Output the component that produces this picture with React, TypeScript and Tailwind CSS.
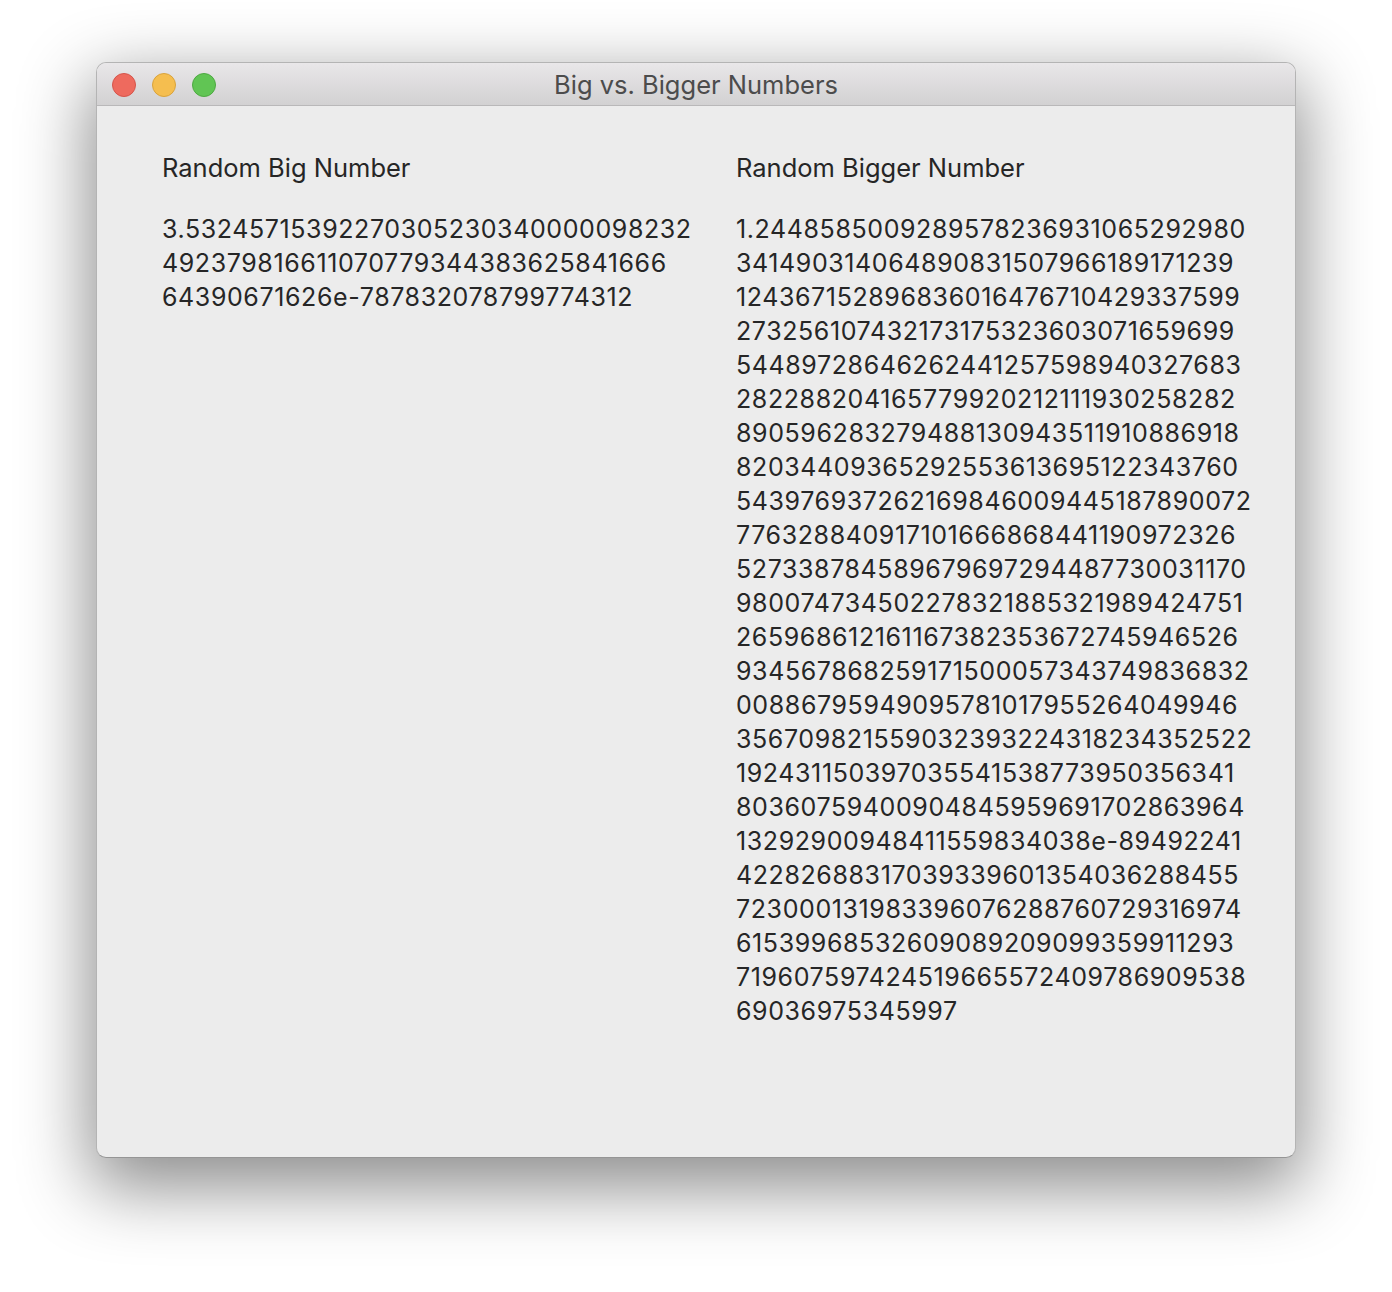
const BIG = [
  '3.53245715392270305230340000098232',
  '492379816611070779344383625841666',
  '64390671626e-787832078799774312',
]

const BIGGER = [
  '1.2448585009289578236931065292980',
  '341490314064890831507966189171239',
  '124367152896836016476710429337599',
  '273256107432173175323603071659699',
  '54489728646262441257598940327683',
  '282288204165779920212111930258282',
  '890596283279488130943511910886918',
  '82034409365292553613695122343760',
  '543976937262169846009445187890072',
  '776328840917101666868441190972326',
  '527338784589679697294487730031170',
  '980074734502278321885321989424751',
  '265968612161167382353672745946526',
  '934567868259171500057343749836832',
  '00886795949095781017955264049946',
  '356709821559032393224318234352522',
  '192431150397035541538773950356341',
  '80360759400904845959691702863964',
  '13292900948411559834038e-89492241',
  '42282688317039339601354036288455',
  '723000131983396076288760729316974',
  '61539968532609089209099359911293',
  '719607597424519665572409786909538',
  '69036975345997',
]

function NumberColumn({ label, lines }: { label: string; lines: string[] }) {
  return (
    <div className="flex flex-col">
      <div className="leading-[34px] mb-[27px] text-[25.5px]">{label}</div>
      <div className="leading-[34px] tracking-[0.6px]">
        {lines.map((l, i) => (
          <div key={i} className="whitespace-nowrap">{l}</div>
        ))}
      </div>
    </div>
  )
}

export default function App() {
  return (
    <div className="w-[1392px] h-[1292px] bg-white flex justify-center pt-[62px]" style={{ fontFamily: 'Inter, "Noto Sans", sans-serif' }}>
      <div className="w-[1200px] h-[1096px] flex flex-col rounded-[10px] overflow-hidden bg-[#ececec] border border-[#b4b4b4] border-b-[#959595] shadow-[0_24px_70px_6px_rgba(0,0,0,0.45)]">
        {/* Title bar */}
        <div className="relative h-[43px] shrink-0 flex items-center justify-center bg-gradient-to-b from-[#e9e7e9] to-[#d2d1d2] border-b border-[#b9b8b9]">
          <div className="absolute left-[15px] top-[10px] flex gap-[16px]">
            <span className="w-[24px] h-[24px] rounded-full bg-[#ee6a5e] border border-[#d5554b]" />
            <span className="w-[24px] h-[24px] rounded-full bg-[#f5be4f] border border-[#d9a33c]" />
            <span className="w-[24px] h-[24px] rounded-full bg-[#61c554] border border-[#4ea942]" />
          </div>
          <span className="text-[25.5px] text-[#4c4c4c] pt-[3px]">Big vs. Bigger Numbers</span>
        </div>

        {/* Content */}
        <div className="flex-1 grid grid-cols-[574px_1fr] pl-[65px] pt-[45px] text-[25px] text-[#262626]">
          <NumberColumn label="Random Big Number" lines={BIG} />
          <NumberColumn label="Random Bigger Number" lines={BIGGER} />
        </div>
      </div>
    </div>
  )
}
